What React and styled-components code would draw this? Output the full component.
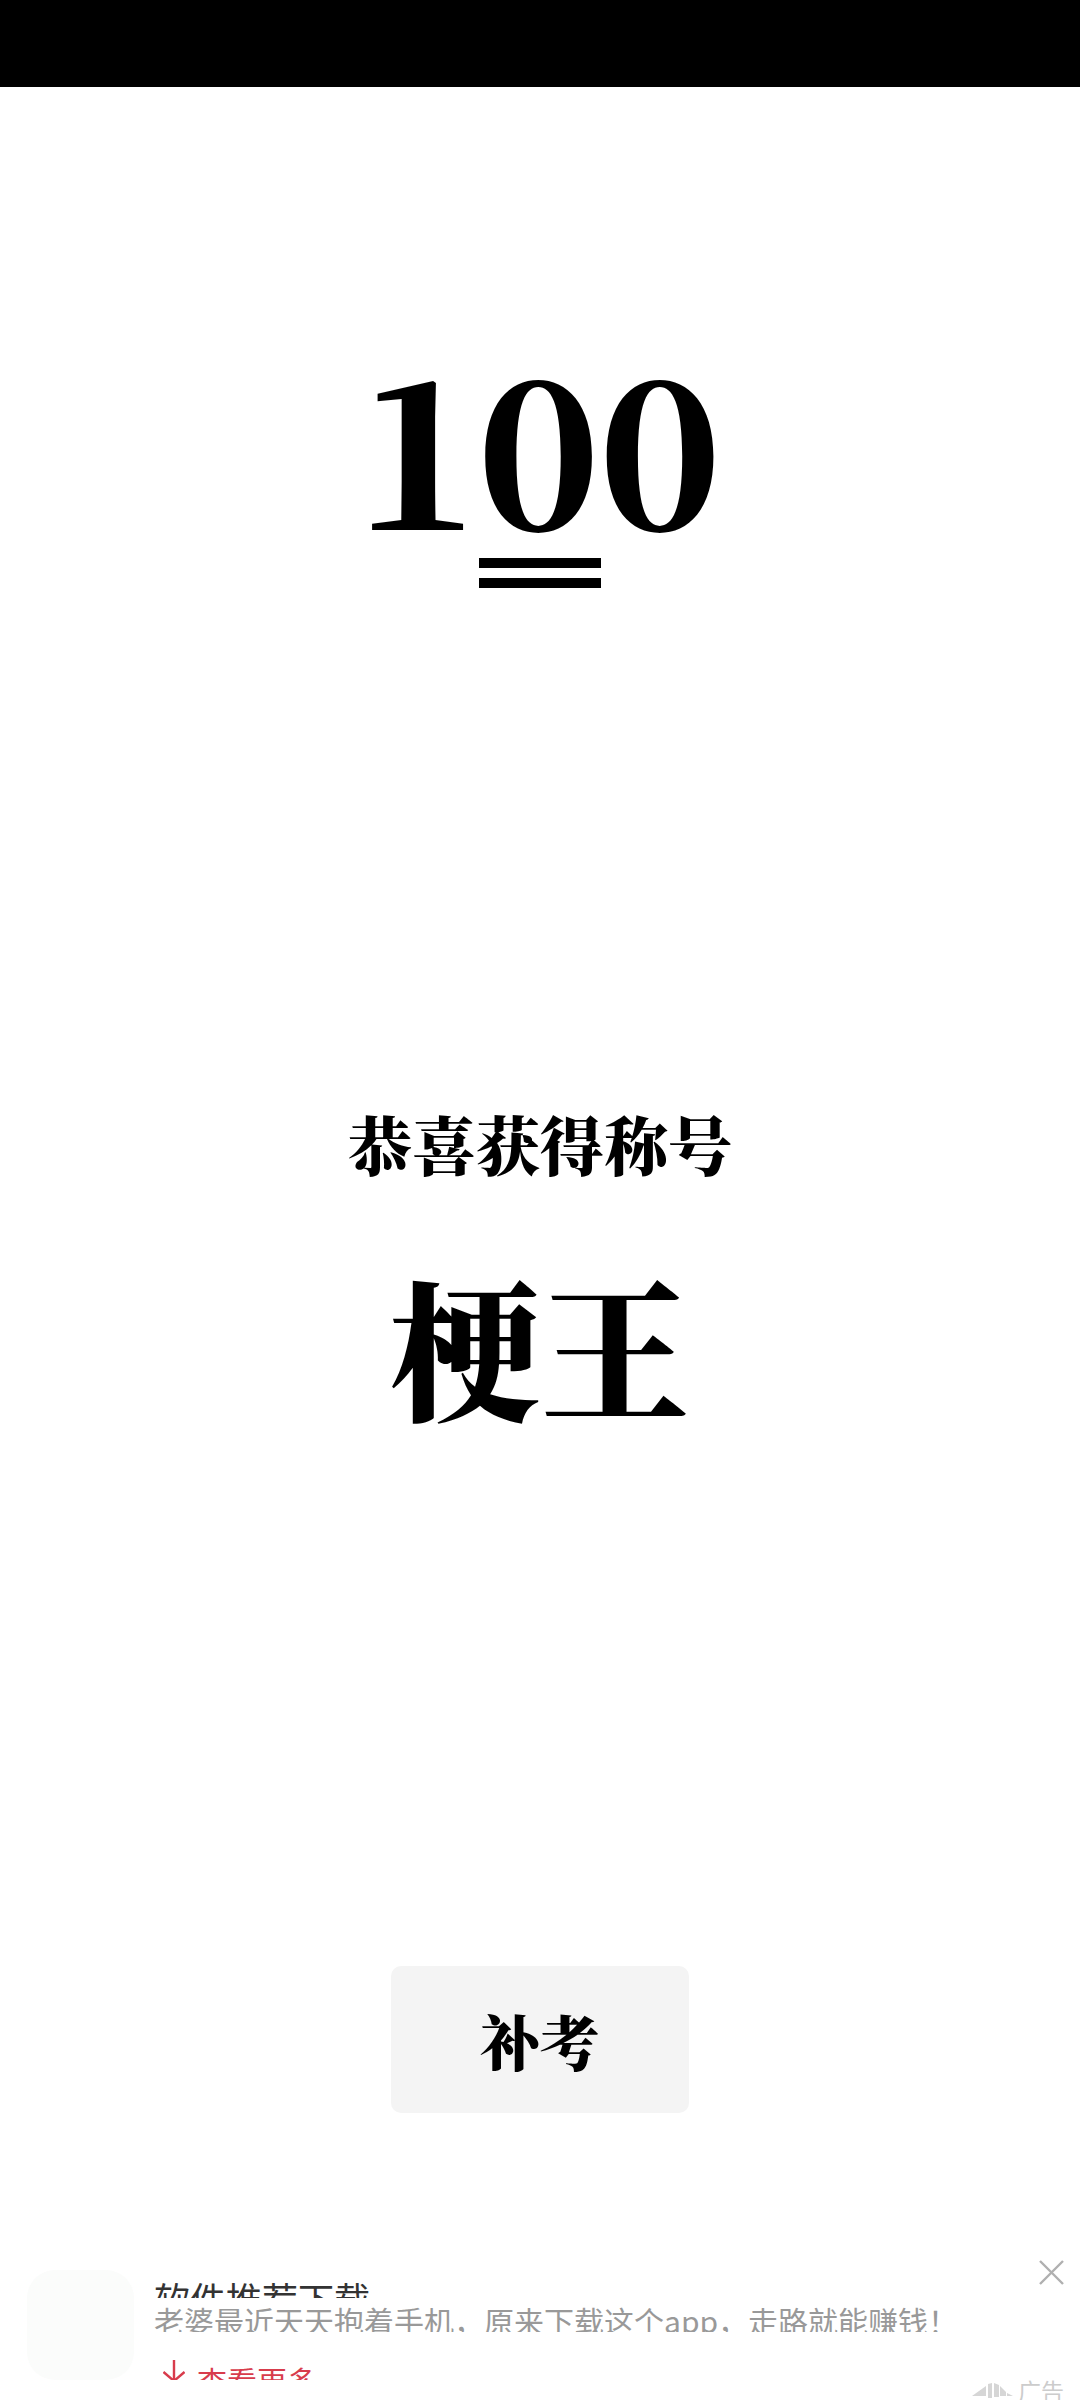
import React from "react";
import styled, { createGlobalStyle } from "styled-components";

const GlobalStyle = createGlobalStyle`
html, body {
    margin: 0;
    padding: 0;
    background: #fff;
}
* {
    box-sizing: border-box;
}
`

const cjkHeavy = `"Noto Serif CJK SC", "Noto Sans CJK SC", serif`
const cjkPlain = `"Noto Sans CJK SC", sans-serif`

const App = () => {
    return (
        <Page>
            <GlobalStyle />
            <StatusBar />
            <Result>
                <Score>100</Score>
                <DoubleRule />
                <Congrats>恭喜获得称号</Congrats>
                <Honor>梗王</Honor>
                <RetakeBtn>补考</RetakeBtn>
            </Result>
            <AdCard>
                <AdIcon />
                <AdBody>
                    <AdTitle>软件推荐下载</AdTitle>
                    <AdDesc>老婆最近天天抱着手机，原来下载这个app，走路就能赚钱！</AdDesc>
                    <AdLink>
                        <svg width="22" height="20" viewBox="0 0 22 20" fill="none" stroke="#d83c4c" strokeWidth="2.4">
                            <path d="M11 0V20M0.5 12L11 21L21.5 12" />
                        </svg>
                        <span>查看更多</span>
                    </AdLink>
                </AdBody>
                <AdClose aria-label="close">
                    <svg width="25" height="25" viewBox="0 0 25 25" fill="none" stroke="#b0b0b0" strokeWidth="2.4">
                        <path d="M1 1L24 24M24 1L1 24" />
                    </svg>
                </AdClose>
                <AdLabel>
                    <svg width="41" height="15" viewBox="0 0 41 15" fill="#d6d6d6">
                        <path d="M0 13L14 3V13Z" />
                        <path d="M16 1L20 0V15H16Z" />
                        <path d="M22 0L27 2V14H22Z" />
                        <path d="M28 3L34 9V13H28Z" />
                        <path d="M35 10L41 13H35Z" />
                    </svg>
                    <span>广告</span>
                </AdLabel>
            </AdCard>
        </Page>
    );
};
export default App


const Page = styled.div`
position: relative;
width: 1080px;
height: 2400px;
overflow: hidden;
display: flex;
flex-direction: column;
background: #fff;
`
const StatusBar = styled.div`
height: 87px;
flex-shrink: 0;
background: #000;
`
const Result = styled.div`
flex: 1;
display: flex;
flex-direction: column;
align-items: center;
padding-top: 240px;
`
const Score = styled.div`
margin-right: 6px;
font-family: "Noto Serif CJK SC", serif;
font-weight: 900;
font-size: 204px;
line-height: 230px;
letter-spacing: -3px;
color: #000;
`
const DoubleRule = styled.div`
width: 122px;
height: 30px;
margin-top: 1px;
border-top: 10px solid #000;
border-bottom: 10px solid #000;
`
const Congrats = styled.div`
margin-top: 516px;
font-family: ${cjkHeavy};
font-weight: 900;
font-size: 64px;
line-height: 76px;
color: #000;
`
const Honor = styled.div`
margin-top: 79px;
font-family: ${cjkHeavy};
font-weight: 900;
font-size: 150px;
line-height: 170px;
color: #000;
`
const RetakeBtn = styled.button`
width: 298px;
height: 147px;
margin-top: 537px;
border: none;
border-radius: 10px;
background: #f4f4f4;
font-family: ${cjkHeavy};
font-weight: 900;
font-size: 60px;
color: #000;
`
const AdCard = styled.div`
position: relative;
height: 166px;
flex-shrink: 0;
display: flex;
padding: 36px 0 0 27px;
`
const AdIcon = styled.div`
width: 107px;
height: 110px;
border-radius: 28px;
background: #fbfcfb;
`
const AdBody = styled.div`
margin-left: 20px;
display: flex;
flex-direction: column;
`
const AdTitle = styled.div`
height: 18px;
margin-top: 10px;
overflow: hidden;
font-family: ${cjkPlain};
font-size: 36px;
line-height: 36px;
color: #333;
`
const AdDesc = styled.div`
height: 27px;
margin-top: 7px;
overflow: hidden;
font-family: ${cjkPlain};
font-size: 30px;
line-height: 30px;
white-space: nowrap;
color: #999;
`
const AdLink = styled.div`
height: 20px;
margin-top: 28px;
margin-left: 9px;
overflow: hidden;
display: flex;
gap: 12px;
font-family: ${cjkPlain};
font-size: 30px;
line-height: 30px;
color: #d83c4c;
span {
    margin-top: 5px;
}
`
const AdClose = styled.button`
position: absolute;
top: 26px;
right: 16px;
padding: 0;
border: none;
background: none;
line-height: 0;
`
const AdLabel = styled.div`
position: absolute;
top: 145px;
right: 16px;
display: flex;
align-items: center;
gap: 5px;
font-family: ${cjkPlain};
font-size: 23px;
line-height: 23px;
color: #ccc;
`
